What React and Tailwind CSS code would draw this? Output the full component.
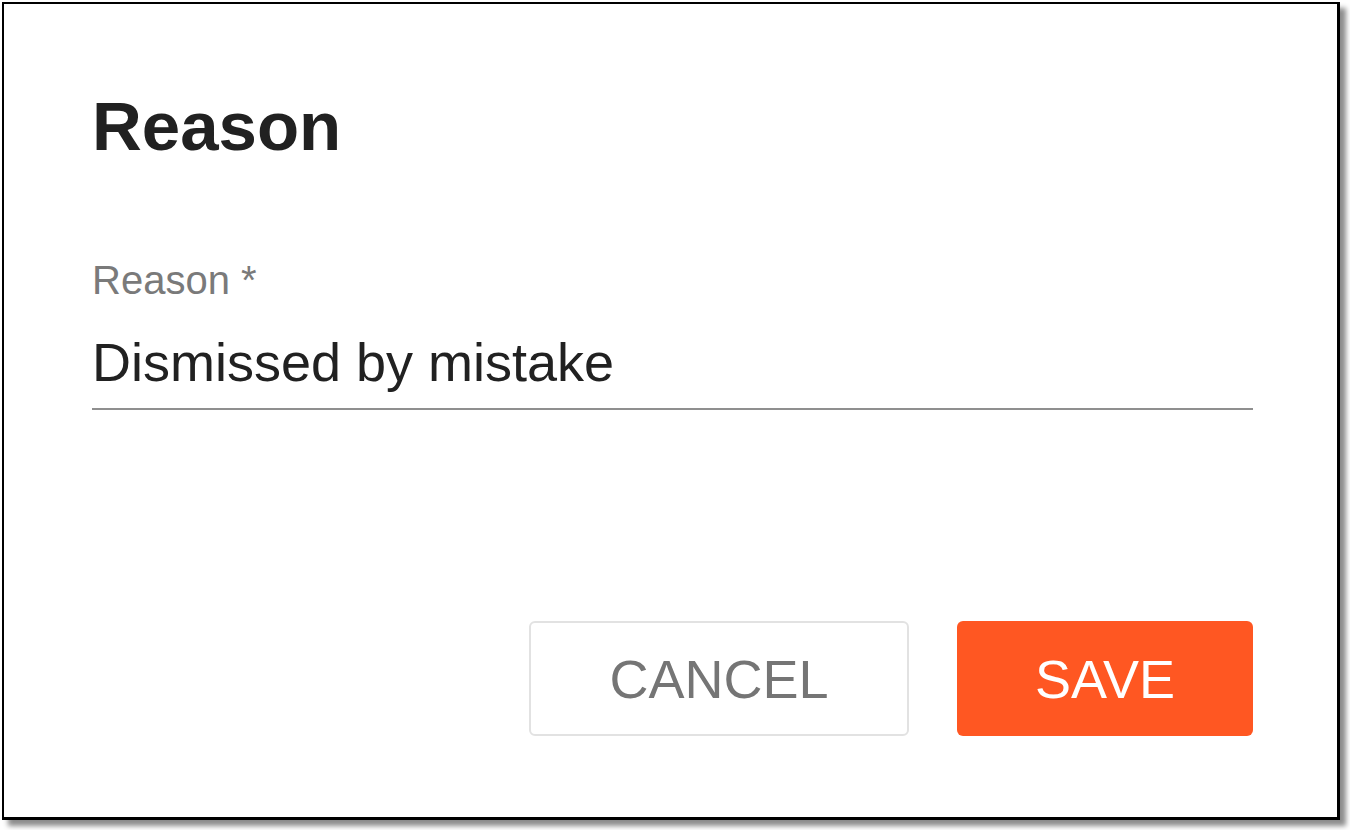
export default function App() {
  return (
    <div className="w-[1350px] h-[830px] bg-white" style={{ fontFamily: '"Liberation Sans", Arial, Helvetica, sans-serif' }}>
      <div className="pt-[2px] pl-[2px]">
        <div className="w-[1338px] h-[818px] border-[3px] border-l-2 border-t-2 border-black bg-white shadow-[6px_6px_5px_rgba(0,0,0,0.45)] flex flex-col pl-[88px] pr-[84px] pt-[88px]">
          <h1 className="text-[69px] leading-[69px] font-bold text-[#212121]">Reason</h1>
          <div className="mt-[99px] text-[40px] leading-[40px] text-[#7a7a7a]">Reason *</div>
          <div className="mt-[35px] text-[54px] leading-[54px] text-[#212121]">Dismissed by mistake</div>
          <div className="mt-[19px] h-[2px] bg-[#8f8f8f]"></div>
          <div className="mt-[211px] flex justify-end gap-[48px]">
            <button className="w-[380px] h-[115px] border-2 border-[#e2e2e2] rounded-[6px] bg-white text-[54px] leading-[54px] text-[#757575] flex items-center justify-center">
              CANCEL
            </button>
            <button className="w-[296px] h-[115px] rounded-[6px] bg-[#ff5722] text-[54px] leading-[54px] text-white flex items-center justify-center">
              SAVE
            </button>
          </div>
        </div>
      </div>
    </div>
  );
}
